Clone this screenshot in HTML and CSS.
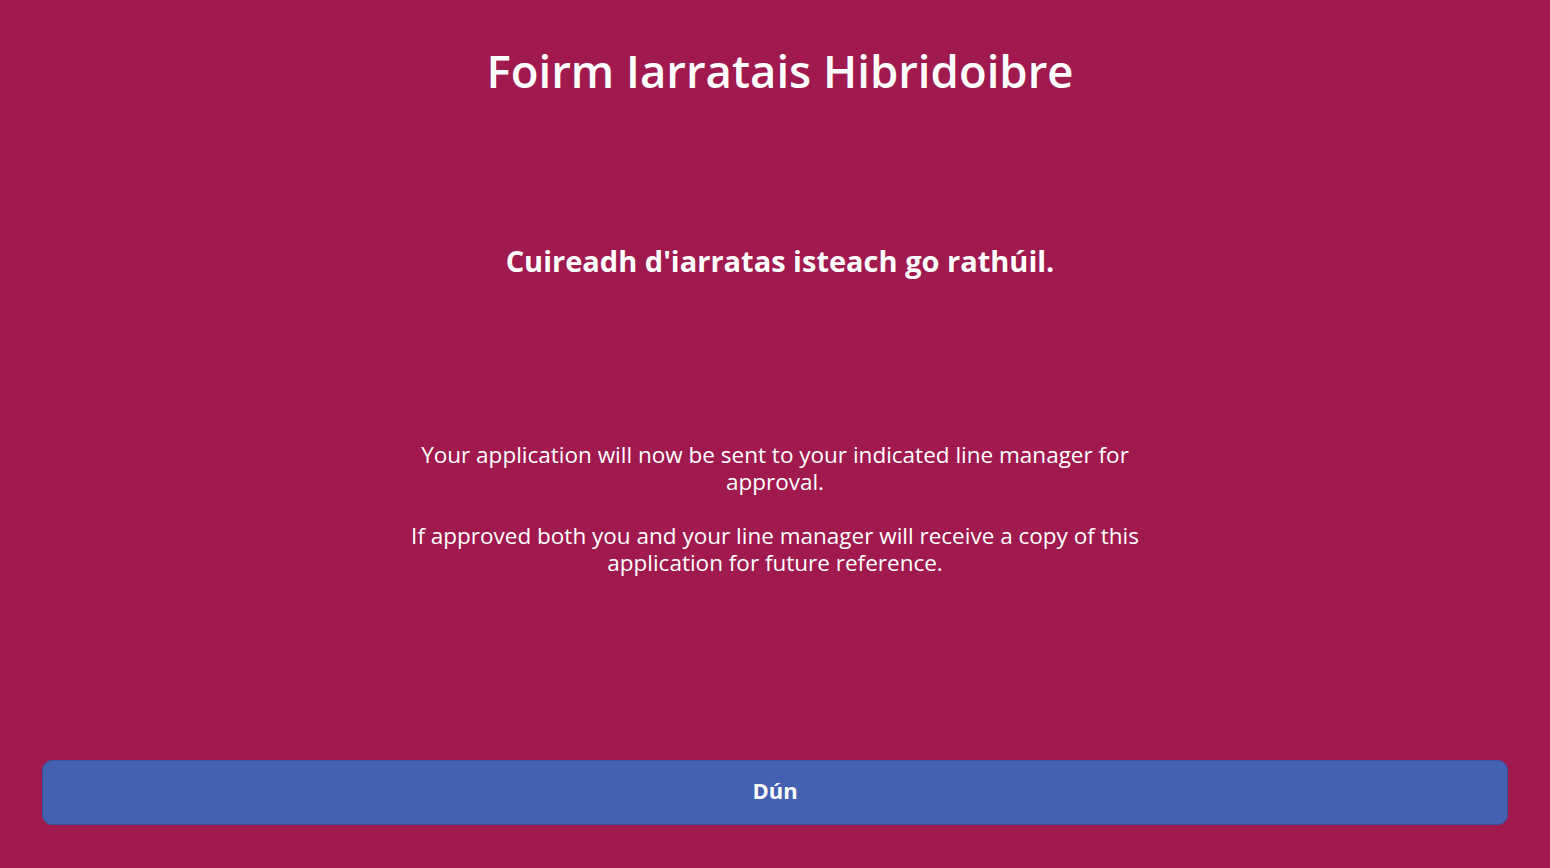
FILE: index.html
```html
<!DOCTYPE html>
<html>
<head>
    <title>Foirm Iarratais Hibridoibre</title>
    <link rel="stylesheet" href="styles.css">
</head>
<body>
    <div id="screen">
        <h1 class="title">Foirm Iarratais Hibridoibre</h1>

        <h2 class="success">Cuireadh d'iarratas isteach go rathúil.</h2>

        <div class="info">
            <p>Your application will now be sent to your indicated line manager for approval.</p>
            <p>If approved both you and your line manager will receive a copy of this application for future reference.</p>
        </div>

        <button type="button" class="close-btn">Dún</button>
    </div>
</body>
</html>
```

FILE: styles.css
```css
html, body {
    margin: 0;
    padding: 0;
}

body {
    font-family: "Open Sans", "Noto Sans", sans-serif;
    background-color: #a0194f;
    color: #fff;
}

#screen {
    height: 868px;
    display: flex;
    flex-direction: column;
    align-items: center;
    box-sizing: border-box;
    padding: 0 42px;
}

.title {
    margin: 41px 0 0 0;
    padding-left: 10px;
    font-size: 45.5px;
    font-weight: 600;
    line-height: 58px;
    text-align: center;
}

.success {
    margin: 142px 0 0 0;
    padding-left: 10px;
    font-size: 29px;
    font-weight: 700;
    line-height: 40px;
    text-align: center;
}

.info {
    margin-top: 160px;
    width: 760px;
    text-align: center;
    font-size: 22.5px;
    line-height: 27px;
}

.info p {
    margin: 0 0 27px 0;
}

.close-btn {
    margin-top: auto;
    margin-bottom: 43px;
    width: 100%;
    height: 65px;
    padding: 0 0 5px 0;
    background-color: #4460b0;
    color: #fff;
    border: 1px solid #3a539c;
    border-radius: 10px;
    font-family: "Open Sans", "Noto Sans", sans-serif;
    font-size: 22px;
    font-weight: 700;
    cursor: pointer;
}

.close-btn:hover {
    background-color: #3a539c;
}
```
